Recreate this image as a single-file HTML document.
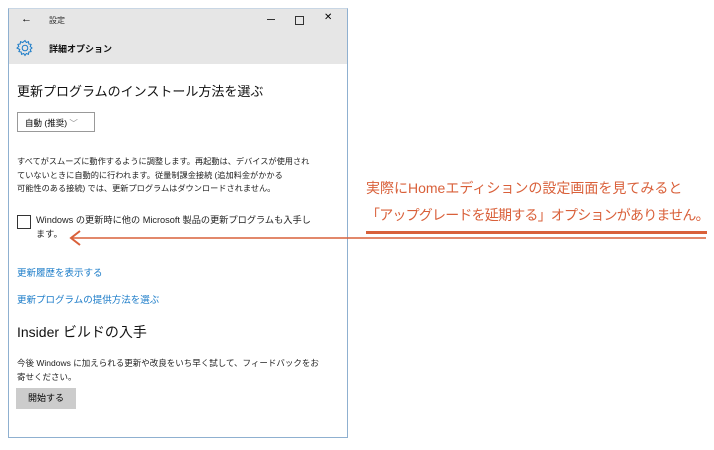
<!DOCTYPE html>
<html><head><meta charset="utf-8"><style>
body{margin:0;width:714px;height:450px;background:#fff;position:relative;overflow:hidden;font-family:"Liberation Sans","Noto Sans CJK JP",sans-serif;color:#000}
.win{position:absolute;left:8px;top:8px;width:338px;height:428px;border:1px solid #8fb0d0;border-top:1px solid #c8d6e4;background:#fff}
.hdr{position:absolute;left:0;top:0;width:338px;height:55px;background:#e6e6e6}
.a{position:absolute;white-space:nowrap}
.s{font-size:8.2px;color:#222}
.link{font-size:9.5px;color:#1a7bc8}
.or{color:#d9603a;font-size:14px}
</style></head><body>
<div class="win">
<div class="hdr">
<div class="a" style="left:12px;top:4px;font-size:11px">←</div>
<div class="a" style="left:40px;top:6px;font-size:8px;color:#333">設定</div>
<div class="a" style="left:258px;top:10px;width:8px;height:1px;background:#333"></div>
<div class="a" style="left:286px;top:7px;width:7px;height:7px;border:1px solid #333"></div>
<div class="a" style="left:315px;top:3px;font-size:10px">✕</div>
<svg class="a" style="left:7px;top:30px" width="18" height="18" viewBox="0 0 18 18"><circle cx="9" cy="9" r="2.8" fill="none" stroke="#1a7bc8" stroke-width="1"/><path d="M9 1.5l1.3 2 2.2-.8.3 2.3 2.3.4-.9 2.1 1.8 1.5-1.8 1.5.9 2.1-2.3.4-.3 2.3-2.2-.8L9 16.5l-1.3-2-2.2.8-.3-2.3-2.3-.4.9-2.1L1 9l1.8-1.5-.9-2.1 2.3-.4.3-2.3 2.2.8z" fill="none" stroke="#1a7bc8" stroke-width="1"/></svg>
<div class="a" style="left:40px;top:33px;font-size:9px;font-weight:bold;color:#111">詳細オプション</div>
</div>
<div class="a" style="left:8px;top:72px;font-size:13px;color:#111">更新プログラムのインストール方法を選ぶ</div>
<div class="a" style="left:8px;top:103px;width:78px;height:20px;border:1px solid #999;box-sizing:border-box"></div>
<div class="a" style="left:16px;top:108px;font-size:8.5px">自動 (推奨) <span style="color:#888">﹀</span></div>
<div class="a s" style="left:8px;top:146px;line-height:13.5px">すべてがスムーズに動作するように調整します。再起動は、デバイスが使用され<br>ていないときに自動的に行われます。従量制課金接続 (追加料金がかかる<br>可能性のある接続) では、更新プログラムはダウンロードされません。</div>
<div class="a" style="left:8px;top:206px;width:12px;height:12px;border:1.5px solid #333"></div>
<div class="a s" style="left:27px;top:205px;line-height:13.5px;font-size:9.2px">Windows の更新時に他の Microsoft 製品の更新プログラムも入手し<br>ます。</div>
<div class="a link" style="left:8px;top:256px">更新履歴を表示する</div>
<div class="a link" style="left:8px;top:283px">更新プログラムの提供方法を選ぶ</div>
<div class="a" style="left:8px;top:313px;font-size:14px;color:#111">Insider ビルドの入手</div>
<div class="a s" style="left:8px;top:347px;line-height:14px;font-size:8.5px">今後 Windows に加えられる更新や改良をいち早く試して、フィードバックをお<br>寄せください。</div>
<div class="a" style="left:7px;top:379px;width:60px;height:21px;background:#ccc;font-size:9px;text-align:center;line-height:21px">開始する</div>
</div>
<div class="a or" style="left:366px;top:178px;letter-spacing:0px">実際にHomeエディションの設定画面を見てみると</div>
<div class="a or" style="left:366px;top:205px;letter-spacing:-0.8px">「アップグレードを延期する」オプションがありません。</div>
<div class="a" style="left:366px;top:231px;width:341px;height:3px;background:#d9603a"></div>
<svg class="a" style="left:0;top:0" width="714" height="450"><path d="M706 238H72" stroke="#d9603a" stroke-width="1.5"/><path d="M80 231L71 238L80 245" fill="none" stroke="#d9603a" stroke-width="2"/></svg>
</body></html>
